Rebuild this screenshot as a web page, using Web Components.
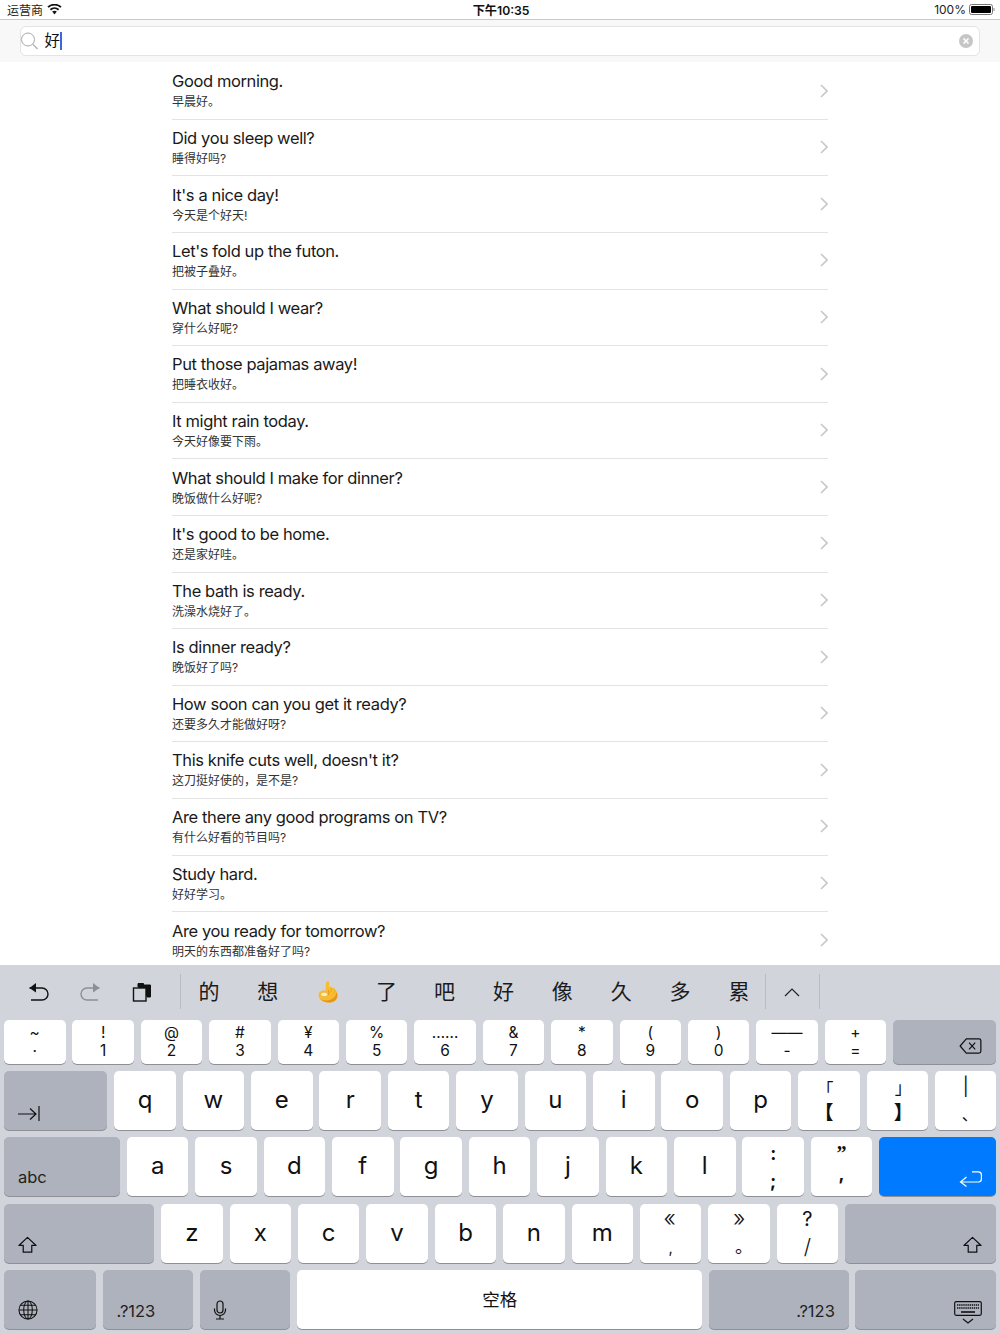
<!DOCTYPE html>
<html lang="zh">
<head>
<meta charset="utf-8">
<title>Phrases</title>
<style>
  html, body { margin: 0; height: 100%; }
  body {
    width: 1000px;
    height: 1334px;
    overflow: hidden;
    display: flex;
    flex-direction: column;
    background: #fff;
    color: #000;
    font-family: "Inter", "Noto Sans CJK SC", sans-serif;
  }
</style>
</head>
<body>
<template id="template-status-bar">
  <style>
    :host {
      display: flex;
      align-items: center;
      justify-content: space-between;
      height: 19px;
      padding: 0 5px 0 7px;
      background: #fff;
      border-bottom: 1px solid #c8c8c8;
      font-size: 12px;
      color: #222;
    }
    .side { display: flex; align-items: center; gap: 4px; }
    #clock { font-weight: 600; font-size: 12.2px; color: #111; margin-left: 6px; }
    .batt { gap: 3px; }
  </style>
  <div class="side">
    <span>运营商</span>
    <svg width="15" height="11" viewBox="0 0 15 11">
      <path d="M7.5 10.5 L5.2 7.6 A3.8 3.8 0 0 1 9.8 7.6 Z" fill="#111"/>
      <path d="M3.4 5.7 A6.2 6.2 0 0 1 11.6 5.7" fill="none" stroke="#111" stroke-width="1.8"/>
      <path d="M1 3.2 A9.6 9.6 0 0 1 14 3.2" fill="none" stroke="#111" stroke-width="1.8"/>
    </svg>
  </div>
  <span id="clock">下午10:35</span>
  <div class="side batt">
    <span>100%</span>
    <svg width="26" height="11" viewBox="0 0 26 11">
      <rect x="0.5" y="0.5" width="23" height="10" rx="2" fill="none" stroke="#777"/>
      <rect x="2" y="2" width="20" height="7" rx="1" fill="#000"/>
      <rect x="24.5" y="4" width="1" height="3" fill="#888"/>
    </svg>
  </div>
</template>

<template id="template-search-bar">
  <style>
    :host {
      display: flex;
      padding: 6px 20px;
      height: 30px;
      background: #f8f8f8;
    }
    #box {
      flex: 1;
      display: flex;
      align-items: center;
      background: #fff;
      border: 1px solid #e4e4e4;
      border-radius: 6px;
      padding: 0 6px 0 0;
    }
    #text { font-size: 15.5px; margin-left: 4.5px; line-height: 24px; color: #111; }
    #caret { width: 2px; height: 18px; background: #3f66e0; }
    .grow { flex: 1; }
  </style>
  <div id="box">
    <svg width="20" height="20" viewBox="0 0 20 20" style="margin-left:-1px">
      <circle cx="8" cy="8.5" r="6.5" fill="none" stroke="#a8a8a8" stroke-width="1"/>
      <path d="M12.7 13.2 L17.5 18" stroke="#a8a8a8" stroke-width="1.1"/>
    </svg>
    <span id="text">好</span><span id="caret"></span>
    <span class="grow"></span>
    <svg width="14" height="14" viewBox="0 0 14 14">
      <circle cx="7" cy="7" r="7" fill="#c6c6c6"/>
      <path d="M4.5 4.5 L9.5 9.5 M9.5 4.5 L4.5 9.5" stroke="#fff" stroke-width="1.7"/>
    </svg>
  </div>
</template>

<template id="template-phrase-row">
  <style>
    :host {
      display: flex;
      align-items: center;
      height: 56.6px;
      box-sizing: border-box;
      border-bottom: 1px solid #e3e3e3;
      flex: none;
    }
    :host(:last-child) { border-bottom: 0; }
    #txt { flex: 1; padding-bottom: 1.5px; }
    #en { font-size: 16.5px; letter-spacing: -0.39px; line-height: 22px; color: #1a1a1a; }
    #zh { font-size: 12px; line-height: 17px; margin-top: 1px; color: #333; }
    svg { margin-top: -1px; }
  </style>
  <div id="txt">
    <div id="en"><slot name="en"></slot></div>
    <div id="zh"><slot name="zh"></slot></div>
  </div>
  <svg width="8" height="14" viewBox="0 0 8 14">
    <path d="M1 1 L7 7 L1 13" fill="none" stroke="#c7c7cc" stroke-width="1.6"/>
  </svg>
</template>

<template id="template-key">
  <style>
    :host {
      display: flex;
      flex-direction: column;
      align-items: center;
      justify-content: center;
      box-sizing: border-box;
      width: var(--w, 61.5px);
      flex: none;
      background: #fff;
      border-radius: 5px;
      box-shadow: 0 1px 0 #8e9096;
      color: #111;
      font-size: 24px;
      line-height: 1;
      padding-bottom: 1px;
    }
    :host([grow]) { flex: 1; width: auto; }
    :host([kind="gray"]) { background: #aeb2bc; }
    :host([kind="blue"]) { background: #007aff; }
    :host([kind="gray"]), :host([kind="blue"]) {
      align-items: flex-start;
      justify-content: flex-end;
      padding: 0 13.7px var(--pb, 9.5px) 14px;
    }
    :host([align="right"]) { align-items: flex-end; }
  </style>
  <slot></slot>
</template>

<template id="template-pair-key">
  <style>
    :host {
      display: flex;
      flex-direction: column;
      align-items: center;
      justify-content: center;
      box-sizing: border-box;
      width: 61.5px;
      flex: none;
      background: #fff;
      border-radius: 5px;
      box-shadow: 0 1px 0 #8e9096;
      color: #111;
      font-size: 15.5px;
      line-height: 18px;
      padding-top: 1px;
    }
    div { height: 18px; text-align: center; }
    :host([tall]) { font-size: 18px; line-height: 27px; padding-top: 0; }
    :host([tall]) div { height: 27px; }
  </style>
  <div><slot name="up"></slot></div>
  <div><slot name="low"></slot></div>
</template>

<template id="template-kb-toolbar">
  <style>
    :host {
      display: flex;
      align-items: center;
      height: 35px;
      padding: 9px 0 10.6px;
      color: #111;
    }
    .ico { width: 51.5px; display: flex; justify-content: center; flex: none; }
    .sep { width: 1px; height: 35px; background: #b9bcc4; flex: none; }
    .cand {
      width: 58.9px;
      flex: none;
      text-align: center;
      font-size: 21px;
      line-height: 35px;
      color: #1b1b1b;
    }
  </style>
  <span style="width:9px;flex:none"></span>
  <span class="ico"><svg width="22" height="20" viewBox="0 0 22 20" fill="none" stroke="#111" stroke-width="1.4">
    <path d="M1.5 6 H14 A6 6 0 0 1 14 18 H3"/><path d="M8 1 L1.5 6 L8 10.5" fill="#111" stroke="none"/>
  </svg></span>
  <span class="ico"><svg width="22" height="20" viewBox="0 0 22 20" fill="none" stroke="#8c8f96" stroke-width="1.4">
    <path d="M20.5 6 H8 A6 6 0 0 0 8 18 H19"/><path d="M14 1 L20.5 6 L14 10.5" fill="#8c8f96" stroke="none"/>
  </svg></span>
  <span class="ico"><svg width="20" height="20" viewBox="0 0 20 20" fill="none" stroke="#111" stroke-width="1.4">
    <path d="M6 5 V1.5 H11.5 V3 H18.5 V15 H15" fill="#111" stroke-width="1"/><rect x="1.5" y="6" width="12.5" height="13" fill="#d1d5db"/>
  </svg></span>
  <span style="width:12px;flex:none"></span>
  <span class="sep"></span>
  <span class="cand" style="margin-left:-1px">的</span>
  <span class="cand">想</span>
  <span class="cand" style="display:flex;justify-content:center;align-items:center">
    <svg width="20" height="22" viewBox="0 0 20 22" style="margin-left:2px">
      <path d="M9 .5 C10.5 0 11.5 1 11.3 2.5 L11 6 C12 5 13.5 5.5 14 7 C15.5 6.5 17 7.5 17.5 9 C19 10.5 20 13 19.3 16 C18.3 20 14 21.8 10 21.5 C5.5 21.2 .5 18.5 .5 14 C.5 11.5 3 9.5 6 9.5 L7.5 9.5 L8 3 C8.1 2 8.2 1 9 .5 Z" fill="#f7bd2e"/>
      <path d="M2 17.5 C5 20 12 20.5 16 16.5 C17.5 15 18.3 13 18.5 11 C19.5 13 19.6 15 19.3 16 C18.3 20 14 21.8 10 21.5 C6.5 21.3 3.5 19.8 2 17.5 Z" fill="#e8941c"/>
      <ellipse cx="6.2" cy="13.4" rx="3.6" ry="2.3" fill="#fdeeb8" stroke="#e8a224" stroke-width=".7"/>
      <path d="M10.3 14 C11.3 12 11 10.5 10.2 9" fill="none" stroke="#e8941c" stroke-width="1"/>
      <path d="M13.8 7 L13 11 M17.2 9 L15.8 12.5" fill="none" stroke="#e8a224" stroke-width=".7"/>
    </svg>
  </span>
  <span class="cand" style="position:relative;left:1px">了</span>
  <span class="cand">吧</span>
  <span class="cand">好</span>
  <span class="cand">像</span>
  <span class="cand">久</span>
  <span class="cand">多</span>
  <span class="cand">累</span>
  <span class="sep" style="margin-left:-3.5px"></span>
  <span style="width:53px;flex:none;display:flex;justify-content:center">
    <svg width="16" height="10" viewBox="0 0 16 10" fill="none" stroke="#222" stroke-width="1.2"><path d="M1 9 L8 2 L15 9"/></svg>
  </span>
  <span class="sep"></span>
</template>

<template id="template-keyboard">
  <style>
    :host {
      display: block;
      flex: none;
      height: 369px;
      box-sizing: border-box;
      background: #d1d5db;
      padding: 0 4.3px 0 4px;
      font-family: "Inter", "Noto Sans CJK SC", sans-serif;
    }
    .row { display: flex; gap: 6.9px; margin-top: 7.4px; height: 59px; }
    .row.first { margin-top: 0; height: 44px; }
    .lbl { display: block; font-size: 16.5px; color: #222; }
  </style>
  <kb-toolbar></kb-toolbar>
  <div class="row first" id="r1"></div>
  <div class="row" id="r2"></div>
  <div class="row" id="r3"></div>
  <div class="row" id="r4"></div>
  <div class="row" id="r5"></div>
</template>

<status-bar></status-bar>
<search-bar></search-bar>
<phrase-list></phrase-list>
<ios-keyboard></ios-keyboard>

<script>
  function cloneTemplate(el, id) {
    const root = el.attachShadow({ mode: 'open' });
    root.appendChild(document.getElementById(id).content.cloneNode(true));
    return root;
  }

  class StatusBar extends HTMLElement {
    constructor() { super(); cloneTemplate(this, 'template-status-bar'); }
  }
  class SearchBar extends HTMLElement {
    constructor() { super(); cloneTemplate(this, 'template-search-bar'); }
  }
  class PhraseRow extends HTMLElement {
    constructor() { super(); cloneTemplate(this, 'template-phrase-row'); }
  }
  class KbKey extends HTMLElement {
    constructor() { super(); cloneTemplate(this, 'template-key'); }
  }
  class PairKey extends HTMLElement {
    constructor() { super(); cloneTemplate(this, 'template-pair-key'); }
  }
  class KbToolbar extends HTMLElement {
    constructor() { super(); cloneTemplate(this, 'template-kb-toolbar'); }
  }

  const PHRASES = [
    ['Good morning.', '早晨好。'],
    ['Did you sleep well?', '睡得好吗?'],
    ["It's a nice day!", '今天是个好天!'],
    ["Let's fold up the futon.", '把被子叠好。'],
    ['What should I wear?', '穿什么好呢?'],
    ['Put those pajamas away!', '把睡衣收好。'],
    ['It might rain today.', '今天好像要下雨。'],
    ['What should I make for dinner?', '晚饭做什么好呢?'],
    ["It's good to be home.", '还是家好哇。'],
    ['The bath is ready.', '洗澡水烧好了。'],
    ['Is dinner ready?', '晚饭好了吗?'],
    ['How soon can you get it ready?', '还要多久才能做好呀?'],
    ["This knife cuts well, doesn't it?", '这刀挺好使的，是不是?'],
    ['Are there any good programs on TV?', '有什么好看的节目吗?'],
    ['Study hard.', '好好学习。'],
    ['Are you ready for tomorrow?', '明天的东西都准备好了吗?']
  ];

  class PhraseList extends HTMLElement {
    constructor() {
      super();
      const root = this.attachShadow({ mode: 'open' });
      root.innerHTML = `<style>
        :host { display: block; flex: 1; min-height: 0; overflow: hidden; padding: 1.3px 172px 0; }
      </style><slot></slot>`;
      for (const [en, zh] of PHRASES) {
        const row = document.createElement('phrase-row');
        const a = document.createElement('span'); a.slot = 'en'; a.textContent = en;
        const b = document.createElement('span'); b.slot = 'zh'; b.textContent = zh;
        row.append(a, b);
        this.appendChild(row);
      }
    }
  }

  const ICONS = {
    tab: '<svg width="22" height="15" viewBox="0 0 22 15" fill="none" stroke="#111" stroke-width="1.2"><path d="M0 8 H18 M12 2.5 L18 8 L12 13.5 M21 0 V15"/></svg>',
    shift: '<svg width="19" height="18" viewBox="0 0 20 18" fill="none" stroke="#111" stroke-width="1.3"><path d="M10 1 L19 9.5 H14.5 V16.5 H5.5 V9.5 H1 Z" stroke-linejoin="round"/></svg>',
    ret: '<svg width="23" height="16" viewBox="0 0 23 16" fill="none" stroke="#fff" stroke-width="1.2"><path d="M13 .8 H19.5 A3 3 0 0 1 22.4 3.8 V8 A3 3 0 0 1 19.5 11 H1.5 M7.5 6 L1.5 11 L7.5 15.5"/></svg>',
    del: '<svg width="23" height="16" viewBox="0 0 24 17" fill="none" stroke="#111" stroke-width="1.3"><path d="M7.5 1 H21 A2 2 0 0 1 23 3 V14 A2 2 0 0 1 21 16 H7.5 L1 8.5 Z" stroke-linejoin="round"/><path d="M10.5 5 L17 12 M17 5 L10.5 12"/></svg>',
    globe: '<svg width="20" height="20" viewBox="0 0 21 21" fill="none" stroke="#111" stroke-width="1.1"><circle cx="10.5" cy="10.5" r="9.5"/><ellipse cx="10.5" cy="10.5" rx="4.5" ry="9.5"/><path d="M10.5 1 V20 M1 10.5 H20 M2.5 5.5 H18.5 M2.5 15.5 H18.5"/></svg>',
    mic: '<svg width="14" height="20" viewBox="0 0 14 20" fill="none" stroke="#111" stroke-width="1.2" style="margin-left:-1px"><rect x="4" y="1" width="6" height="12" rx="3"/><path d="M1.5 8.5 V10 A5.5 5.5 0 0 0 12.5 10 V8.5 M7 15.5 V19 M3 19 H11"/></svg>',
    kbd: '<svg width="28" height="23" viewBox="0 0 28 23" fill="none" stroke="#111"><rect x="0.7" y="0.7" width="26.6" height="13.6" rx="1.5" stroke-width="1.2"/><path d="M3 4 H25 M3 7 H25" stroke-width="1.6" stroke-dasharray="1.4 .7"/><path d="M7 11 H21" stroke-width="1.6"/><path d="M9 18 L14 22 L19 18" stroke-width="1.2"/></svg>'
  };

  function k(label, attrs) {
    const el = document.createElement('kb-key');
    el.innerHTML = label;
    for (const n in attrs || {}) el.setAttribute(n, attrs[n]);
    return el;
  }
  // upStyle / lowStyle nudge the glyphs that sit off centre in their font
  function pair(up, low, tall, upStyle, lowStyle) {
    const el = document.createElement('pair-key');
    if (tall) el.setAttribute('tall', '');
    const a = document.createElement('span'); a.slot = 'up'; a.textContent = up;
    const b = document.createElement('span'); b.slot = 'low'; b.textContent = low;
    a.style.cssText = 'display:inline-block;' + (upStyle || '');
    b.style.cssText = 'display:inline-block;' + (lowStyle || '');
    el.append(a, b);
    return el;
  }

  class IosKeyboard extends HTMLElement {
    constructor() {
      super();
      const root = cloneTemplate(this, 'template-keyboard');
      const r1 = root.querySelector('#r1');
      [['~','·'],['!','1'],['@','2'],['#','3'],['¥','4'],['%','5'],['……','6'],['&','7'],['*','8'],['(','9'],[')','0'],['——','-'],['+','=']]
        .forEach(p => r1.appendChild(pair(p[0], p[1])));
      r1.appendChild(k(ICONS.del, { kind: 'gray', grow: '', align: 'right' }));

      const r2 = root.querySelector('#r2');
      r2.appendChild(k(ICONS.tab, { kind: 'gray', style: '--w:103.4px;--pb:8.5px' }));
      'qwertyuiop'.split('').forEach(c => r2.appendChild(k(c)));
      r2.appendChild(pair('「', '【', true, 'font-size:17px;transform:translate(-4px,3px)', 'font-size:19px;font-weight:900;transform:translate(-5px,0)'));
      r2.appendChild(pair('」', '】', true, 'font-size:17px;transform:translate(6px,1px)', 'font-size:19px;font-weight:900;transform:translate(6px,0)'));
      r2.appendChild(pair('|', '、', true, 'font-size:18px', 'font-size:16px;transform:translate(4px,0)'));

      const r3 = root.querySelector('#r3');
      r3.appendChild(k('<span class="lbl">abc</span>', { kind: 'gray', style: '--w:116px;--pb:10.5px' }));
      'asdfghjkl'.split('').forEach(c => r3.appendChild(k(c)));
      r3.appendChild(pair(':', ';', true, 'font-weight:700', 'font-weight:700'));
      r3.appendChild(pair('”', ',', true, 'font-weight:700;font-family:Liberation Serif;font-size:20px', 'font-weight:700;transform:translate(0,-7px)'));
      r3.appendChild(k(ICONS.ret, { kind: 'blue', grow: '', align: 'right' }));

      const r4 = root.querySelector('#r4');
      r4.appendChild(k(ICONS.shift, { kind: 'gray', style: '--w:150.3px;--pb:8.5px' }));
      'zxcvbnm'.split('').forEach(c => r4.appendChild(k(c)));
      r4.appendChild(pair('«', ',', true, 'font-size:23px;font-weight:300;transform:translate(-1px,-1px)', 'font-size:15px'));
      r4.appendChild(pair('»', '。', true, 'font-size:23px;font-weight:300;transform:translate(0,-1px)', 'transform:translate(5px,0)'));
      r4.appendChild(pair('?', '/', true, 'font-size:20px', 'font-size:21px;font-weight:300'));
      r4.appendChild(k(ICONS.shift, { kind: 'gray', grow: '', align: 'right', style: '--pb:8.5px' }));

      const r5 = root.querySelector('#r5');
      r5.appendChild(k(ICONS.globe, { kind: 'gray', style: '--w:91.7px' }));
      r5.appendChild(k('<span class="lbl">.?123</span>', { kind: 'gray', style: '--w:90.3px' }));
      r5.appendChild(k(ICONS.mic, { kind: 'gray', style: '--w:90.7px' }));
      r5.appendChild(k('<span style="font-size:17.5px;position:relative;top:1px">空格</span>', { style: '--w:405px' }));
      r5.appendChild(k('<span class="lbl">.?123</span>', { kind: 'gray', style: '--w:139.3px', align: 'right' }));
      r5.appendChild(k(ICONS.kbd, { kind: 'gray', grow: '', align: 'right', style: '--pb:5px' }));
    }
  }

  customElements.define('status-bar', StatusBar);
  customElements.define('search-bar', SearchBar);
  customElements.define('phrase-row', PhraseRow);
  customElements.define('phrase-list', PhraseList);
  customElements.define('kb-key', KbKey);
  customElements.define('pair-key', PairKey);
  customElements.define('kb-toolbar', KbToolbar);
  customElements.define('ios-keyboard', IosKeyboard);
</script>
</body>
</html>
